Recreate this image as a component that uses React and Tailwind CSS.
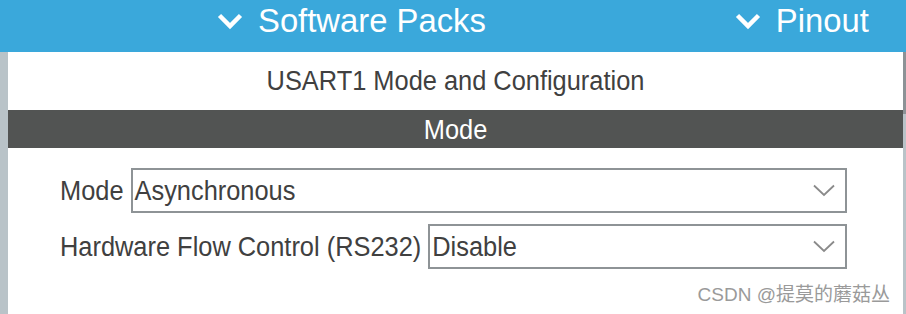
const Chevron = () => (
  <svg width="26" height="17" viewBox="0 0 26 17" className="shrink-0">
    <polyline points="2.5,2.5 13,13 23.5,2.5" fill="none" stroke="#ffffff" strokeWidth="4.5" />
  </svg>
);

const SelectBox = ({ value }) => (
  <div className="flex-1 h-[45px] border-2 border-[#8e9396] bg-white flex items-center pl-[2px] pr-[10px]">
    <span className="flex-1 inline-block scale-y-110 text-[25.4px] leading-[25px] text-[#404040]">{value}</span>
    <svg width="22" height="13" viewBox="0 0 22 13" className="shrink-0">
      <polyline points="1,1.5 11,11 21,1.5" fill="none" stroke="#8a8a8a" strokeWidth="1.8" />
    </svg>
  </div>
);

const Row = ({ label, value }) => (
  <div className="flex items-center">
    <span className="inline-block scale-y-110 mr-[7px] text-[25.4px] leading-[25px] text-[#404040] whitespace-nowrap">
      {label}
    </span>
    <SelectBox value={value} />
  </div>
);

export default function App() {
  return (
    <div
      className="relative w-[906px] h-[314px] overflow-hidden bg-white flex flex-col"
      style={{ fontFamily: '"Liberation Sans", Arial, sans-serif' }}
    >
      {/* Top tab bar */}
      <div className="h-[52px] shrink-0 bg-[#3aa8db] flex items-start pt-[5px] pl-[217px] text-white text-[32.8px] leading-[32px]">
        <div className="flex items-center gap-[15px]">
          <Chevron />
          <span>Software Packs</span>
        </div>
        <div className="flex items-center gap-[15px] ml-[249px]">
          <Chevron />
          <span>Pinout</span>
        </div>
      </div>

      {/* Body */}
      <div className="flex flex-1">
        <div className="w-[8px] bg-[#b9c3c8]" />
        <div className="flex-1 flex flex-col">
          <div className="h-[58px] flex items-center justify-center pb-[2px]">
            <span className="inline-block scale-y-110 text-[25.4px] leading-[25px] text-[#404040]">
              USART1 Mode and Configuration
            </span>
          </div>
          <div className="h-[38px] bg-[#525453] flex items-center justify-center">
            <span className="inline-block scale-y-110 text-[25.4px] leading-[25px] text-white">Mode</span>
          </div>
          <div className="flex flex-col gap-[11px] pt-[20px] pl-[52px] pr-[56px]">
            <Row label="Mode" value="Asynchronous" />
            <Row label="Hardware Flow Control (RS232)" value="Disable" />
          </div>
        </div>
        <div className="w-[3px] flex flex-col">
          <div className="h-[62px] bg-[#8c9296]" />
          <div className="flex-1 bg-[#b9c3c8]" />
        </div>
      </div>

      {/* Watermark */}
      <div
        className="absolute right-[16px] bottom-[9px] text-[19px] leading-[20px] text-[#9a9a9a] whitespace-nowrap"
        style={{ fontFamily: '"Liberation Sans", "Noto Sans CJK SC", sans-serif' }}
      >
        CSDN @提莫的蘑菇丛
      </div>
    </div>
  );
}
